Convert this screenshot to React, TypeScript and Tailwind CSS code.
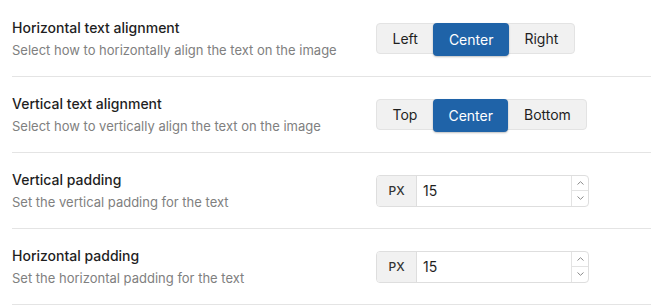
import { useState } from 'react';

interface RowProps {
  title: string;
  description: string;
  children: React.ReactNode;
}

function Row({ title, description, children }: RowProps) {
  return (
    <div className="flex items-center h-[76px] border-b border-[#e4e4e4]">
      <div className="w-[364px] shrink-0">
        <div className="text-[14px] leading-5 font-medium text-[#1f1f1f]">{title}</div>
        <div className="text-[13px] leading-[18px] mt-[3px] text-[#808080]">{description}</div>
      </div>
      {children}
    </div>
  );
}

function Segmented({ options, value, onChange }: { options: string[]; value: string; onChange: (v: string) => void }) {
  return (
    <div className="flex h-[31px] rounded-[4px] border border-[#e3e3e3] bg-[#f1f1f1]">
      {options.map((opt) => (
        <button
          key={opt}
          onClick={() => onChange(opt)}
          className={
            opt === value
              ? 'px-[15.5px] -my-px h-[33px] rounded-[4px] bg-[#1f63a8] text-white text-[14px] shadow-[0_1px_2px_rgba(0,0,0,0.25)]'
              : 'px-[15.5px] h-full text-[14px] text-[#1f1f1f]'
          }
        >
          {opt}
        </button>
      ))}
    </div>
  );
}

function PxInput({ value, onChange }: { value: number; onChange: (v: number) => void }) {
  return (
    <div className="flex w-[213px] h-[32px] rounded-[4px] border border-[#dedede] bg-white overflow-hidden">
      <div className="w-[40px] flex items-center justify-center bg-[#f1f1f1] border-r border-[#dedede] text-[12px] font-medium text-[#333]">
        PX
      </div>
      <input
        type="text"
        value={value}
        onChange={(e) => onChange(Number(e.target.value) || 0)}
        className="flex-1 min-w-0 px-[6px] text-[14px] text-[#1f1f1f] outline-none"
      />
      <div className="w-[17px] flex flex-col border-l border-[#e3e3e3]">
        <button onClick={() => onChange(value + 1)} className="flex-1 flex items-center justify-center border-b border-[#e3e3e3]">
          <svg width="7" height="4" viewBox="0 0 7 4" fill="none" stroke="#8a8a8a" strokeWidth="1">
            <path d="M0.5 3.5L3.5 0.7L6.5 3.5" />
          </svg>
        </button>
        <button onClick={() => onChange(value - 1)} className="flex-1 flex items-center justify-center">
          <svg width="7" height="4" viewBox="0 0 7 4" fill="none" stroke="#8a8a8a" strokeWidth="1">
            <path d="M0.5 0.5L3.5 3.3L6.5 0.5" />
          </svg>
        </button>
      </div>
    </div>
  );
}

export default function App() {
  const [hAlign, setHAlign] = useState('Center');
  const [vAlign, setVAlign] = useState('Center');
  const [vPad, setVPad] = useState(15);
  const [hPad, setHPad] = useState(15);

  return (
    <div className="w-[651px] h-[307px] bg-white pl-3 pt-px font-['Inter',sans-serif]">
      <Row title="Horizontal text alignment" description="Select how to horizontally align the text on the image">
        <Segmented options={['Left', 'Center', 'Right']} value={hAlign} onChange={setHAlign} />
      </Row>
      <Row title="Vertical text alignment" description="Select how to vertically align the text on the image">
        <Segmented options={['Top', 'Center', 'Bottom']} value={vAlign} onChange={setVAlign} />
      </Row>
      <Row title="Vertical padding" description="Set the vertical padding for the text">
        <PxInput value={vPad} onChange={setVPad} />
      </Row>
      <Row title="Horizontal padding" description="Set the horizontal padding for the text">
        <PxInput value={hPad} onChange={setHPad} />
      </Row>
    </div>
  );
}
